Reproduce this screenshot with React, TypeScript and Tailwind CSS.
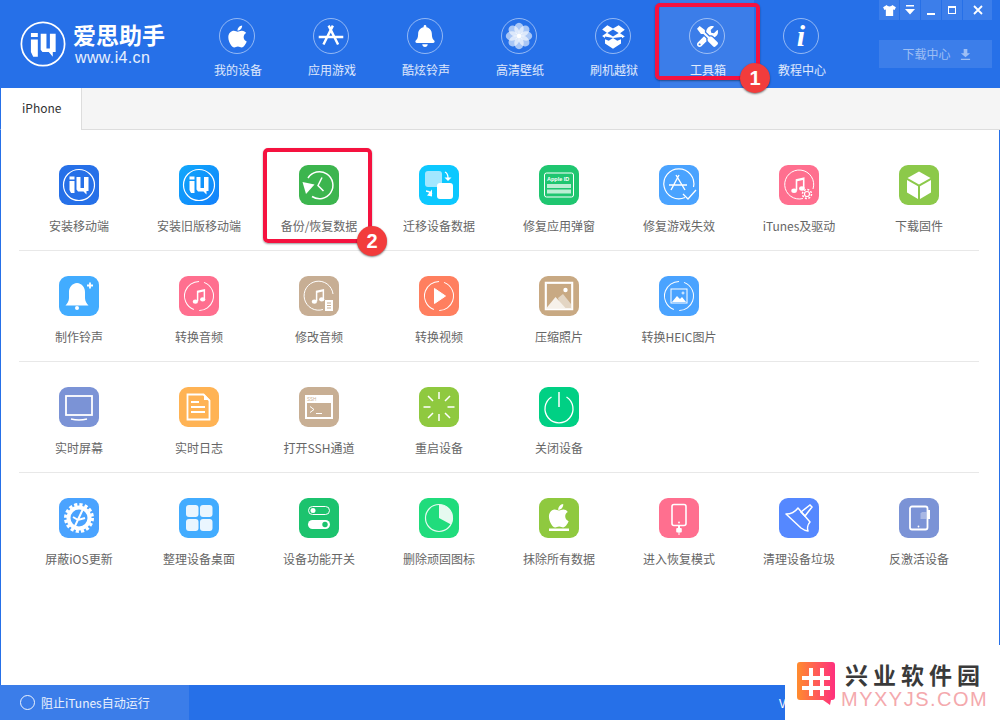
import { FC, ReactNode } from 'react';
import { FaApple, FaBell, FaTools } from 'react-icons/fa';

const W = 'white';

const Svg: FC<{ children: ReactNode }> = ({ children }) => (
  <svg viewBox="0 0 40 40" className="w-10 h-10">{children}</svg>
);

const Mark: FC = () => (
  <>
    <circle cx="20" cy="20" r="15.5" fill="none" stroke={W} strokeWidth="1.2" />
    <path d="M10.5 11.5h5v3h-5zM10.5 16h5v12h-3.5l-1.5-3z" fill={W} />
    <path d="M17.5 12h4v11h3.5V12h4.5v14h-2v3.5l-3-3h-5.5l-1.5-2z" fill={W} />
  </>
);

const Note: FC<{ x?: number; y?: number; s?: number }> = ({ x = 0, y = 0, s = 1 }) => (
  <g transform={`translate(${x} ${y}) scale(${s})`}>
    <path d="M15 11l11-2.5v14h-2V12l-7 1.6V25h-2z" fill={W} />
    <ellipse cx="13" cy="25.5" rx="3.5" ry="2.8" fill={W} />
    <ellipse cx="22.8" cy="22.5" rx="3.5" ry="2.8" fill={W} />
  </g>
);

const Ring: FC<{ rot?: number }> = ({ rot = -70 }) => (
  <circle cx="20" cy="20" r="14.5" fill="none" stroke={W} strokeWidth="1" strokeDasharray="40 5.5" transform={`rotate(${rot} 20 20)`} />
);

const LetterA: FC<{ sw?: number }> = ({ sw = 1.6 }) => (
  <path d="M21 11l-8 15M18 11l9 15M11 21h18" fill="none" stroke={W} strokeWidth={sw} />
);

const apple = 'M30.5 28.2c-.8 1.9-1.2 2.7-2.2 4.3-1.4 2.2-3.4 5-5.9 5-2.2 0-2.8-1.4-5.8-1.4s-3.6 1.4-5.8 1.4c-2.5 0-4.4-2.5-5.8-4.7C1 26.2.6 19.1 3 15.4c1.7-2.6 4.4-4.2 7-4.2 2.6 0 4.2 1.4 6.4 1.4 2.1 0 3.4-1.4 6.4-1.4 2.3 0 4.7 1.2 6.4 3.4-5.6 3.1-4.7 11 1.3 13.6zM20.8 8.800c1.100-1.500 2-3.500 1.700-5.700-1.900.1-4.100 1.300-5.400 2.900-1.200 1.400-2.200 3.500-1.800 5.600 2.100.1 4.200-1.200 5.500-2.800z';

const icons: { label: string; bg: string; icon: ReactNode }[][] = [
  [
    { label: '安装移动端', bg: 'bg-[#2670e8]', icon: <Mark /> },
    { label: '安装旧版移动端', bg: 'bg-gradient-to-br from-[#12a8fb] to-[#1480fb]', icon: <Mark /> },
    {
      label: '备份/恢复数据',
      bg: 'bg-[#3cb54e]',
      icon: (
        <>
          <path d="M9 13A13.5 13.5 0 1 1 13 31.5" fill="none" stroke={W} strokeWidth="1.5" />
          <path d="M3.500 17L15.500 19.500L7 29z" fill={W} />
          <path d="M23 12.500l-4 8 5.500 5.500" fill="none" stroke={W} strokeWidth="1.500" />
        </>
      ),
    },
    {
      label: '迁移设备数据',
      bg: 'bg-[#0cc8ff]',
      icon: (
        <>
          <rect x="6" y="6" width="17" height="16" rx="3" fill="#a2e7ff" />
          <rect x="18" y="18" width="16" height="16" rx="3" fill={W} />
          <path d="M26 7c2 1 3 3 3 6" fill="none" stroke={W} strokeWidth="1.3" />
          <path d="M25.500 12.500h7l-3.500 3.500z" fill={W} />
          <path d="M7 26c2 0 4 1 6 3" fill="none" stroke={W} strokeWidth="1.3" />
          <path d="M13 24.500v7l-5-1z" fill={W} />
        </>
      ),
    },
    {
      label: '修复应用弹窗',
      bg: 'bg-[#1fc670]',
      icon: (
        <>
          <rect x="5.5" y="8" width="29" height="24" rx="2" fill="none" stroke={W} strokeWidth="1" />
          <text x="8" y="16" fontSize="5.5" fontWeight="700" fill={W} fontFamily="'Liberation Sans', sans-serif">Apple ID</text>
          <rect x="8" y="19" width="24" height="4" fill={W} fillOpacity="0.7" />
          <rect x="8" y="24.5" width="24" height="4" fill={W} fillOpacity="0.7" />
        </>
      ),
    },
    {
      label: '修复游戏失效',
      bg: 'bg-[#4aa3ff]',
      icon: (
        <>
          <path d="M26 32.500A15 15 0 1 1 34.500 22" fill="none" stroke={W} strokeWidth="1.2" />
          <g transform="translate(-1 -1)"><LetterA sw={1.4} /></g>
          <path d="M24 29l5 5 8-9" fill="none" stroke={W} strokeWidth="1.3" />
        </>
      ),
    },
    {
      label: 'iTunes及驱动',
      bg: 'bg-[#ff6f8f]',
      icon: (
        <>
          <path d="M24 33.500A14.500 14.500 0 1 1 34 24" fill="none" stroke={W} strokeWidth="1" />
          <Note x={4.7} y={5.4} s={0.8} />
          <circle cx="28" cy="29" r="2.500" fill="none" stroke={W} strokeWidth="1.2" />
          <circle cx="28" cy="29" r="4.500" fill="none" stroke={W} strokeWidth="1.5" strokeDasharray="2 1.5" />
        </>
      ),
    },
    {
      label: '下载固件',
      bg: 'bg-[#8cc94a]',
      icon: (
        <>
          <path d="M20 6.500l11.500 6.500-11.500 6.500L8.500 13z" fill={W} />
          <path d="M8 15l11 6.200V34L8 27.500z" fill={W} />
          <path d="M32 15l-11 6.200V34l11-6.500z" fill={W} />
        </>
      ),
    },
  ],
  [
    {
      label: '制作铃声',
      bg: 'bg-[#42acff]',
      icon: (
        <>
          <path d="M18 7c-5 .4-8 4.300-8 9v6c0 3-1.800 5.500-3.500 7.500h23c-1.700-2-3.500-4.500-3.500-7.500v-6c0-4.700-3-8.600-8-9z" fill={W} />
          <circle cx="18" cy="32" r="2" fill={W} />
          <path d="M31 6.500v6M28 9.500h6" stroke={W} strokeWidth="1.8" />
        </>
      ),
    },
    { label: '转换音频', bg: 'bg-[#ff6f8f]', icon: (<><Ring /><Note x={6.6} y={6.5} s={0.75} /></>) },
    {
      label: '修改音频',
      bg: 'bg-[#c7ae94]',
      icon: (
        <>
          <path d="M24 33.500A14.500 14.500 0 1 1 34 18" fill="none" stroke={W} strokeWidth="1" />
          <Note x={5.6} y={6.5} s={0.75} />
          <path d="M26 24h8v11h-8z" fill={W} />
          <path d="M28 27h4M28 29.500h4M28 32h4" stroke="#c7ae94" strokeWidth="1" />
        </>
      ),
    },
    {
      label: '转换视频',
      bg: 'bg-[#ff7f5f]',
      icon: (<><Ring /><path d="M15.500 12.500l11 7.500-11 7.500z" fill={W} strokeLinejoin="round" stroke={W} /></>),
    },
    {
      label: '压缩照片',
      bg: 'bg-[#c8a983]',
      icon: (
        <>
          <rect x="6.5" y="6.5" width="27" height="27" fill="#f6f1ea" stroke={W} strokeWidth="1.5" />
          <rect x="8" y="8" width="24" height="24" fill="#c8a983" />
          <circle cx="26.5" cy="14" r="2.2" fill={W} />
          <path d="M19 22l5-4 8 10v4H22z" fill="#e3d5c3" />
          <path d="M7.500 32l9-11 10 11z" fill="#f6f1ea" />
        </>
      ),
    },
    {
      label: '转换HEIC图片',
      bg: 'bg-[#4aa3ff]',
      icon: (
        <>
          <Ring />
          <rect x="12" y="13" width="16" height="14" fill="none" stroke={W} strokeWidth="1" />
          <path d="M13 26l5-6 3 3 2-2 4 5z" fill={W} />
          <path d="M24 15.500v3M22.500 17h3" stroke={W} strokeWidth="0.9" />
        </>
      ),
    },
  ],
  [
    {
      label: '实时屏幕',
      bg: 'bg-[#7b93d6]',
      icon: (
        <>
          <rect x="7" y="9" width="26" height="19" fill="none" stroke={W} strokeWidth="1.8" />
          <path d="M12 32c5 1.200 11 1.200 16 0" fill="none" stroke={W} strokeWidth="1.6" />
        </>
      ),
    },
    {
      label: '实时日志',
      bg: 'bg-[#ffb354]',
      icon: (
        <>
          <path d="M8.500 7.500h16l6 6v19h-22z" fill="none" stroke={W} strokeWidth="1.8" />
          <path d="M25 7l6 6h-6z" fill={W} />
          <path d="M12 15h8M12 20h14M12 25h14" stroke={W} strokeWidth="1.8" />
        </>
      ),
    },
    {
      label: '打开SSH通道',
      bg: 'bg-[#c8af94]',
      icon: (
        <>
          <rect x="6" y="8" width="28" height="24" fill={W} />
          <text x="8" y="14" fontSize="4.5" fill="#c8af94" fontFamily="'Liberation Sans', sans-serif">SSH</text>
          <rect x="8" y="16" width="24" height="14" fill="#c8af94" />
          <path d="M11 19.500l4 3-4 3M17 26.500h6" fill="none" stroke={W} strokeWidth="1" />
        </>
      ),
    },
    {
      label: '重启设备',
      bg: 'bg-[#8fc93f]',
      icon: (
        <path d="M20 5v7M20 27v7M4.500 20h7M28.500 20h7M9 9l5 5M26 26l5 5M31 9l-5 5M14 26l-5 5" stroke={W} strokeWidth="1.5" />
      ),
    },
    {
      label: '关闭设备',
      bg: 'bg-[#00d084]',
      icon: (
        <>
          <path d="M12.500 10a14 14 0 1 0 15 0" fill="none" stroke={W} strokeWidth="1.3" />
          <path d="M20 5v15" stroke={W} strokeWidth="1.5" />
        </>
      ),
    },
  ],
  [
    {
      label: '屏蔽iOS更新',
      bg: 'bg-[#4aa3ff]',
      icon: (
        <>
          <circle cx="20" cy="20" r="10.5" fill="none" stroke={W} strokeWidth="4" />
          <circle cx="20" cy="20" r="13.5" fill="none" stroke={W} strokeWidth="3" strokeDasharray="3.2 2.1" />
          <path d="M24 11l-8 17M14 19l5 3 7-2" fill="none" stroke={W} strokeWidth="2" />
        </>
      ),
    },
    {
      label: '整理设备桌面',
      bg: 'bg-[#42acff]',
      icon: (
        <>
          <rect x="7" y="7" width="12.5" height="12" rx="3" fill="#eaf6ff" />
          <rect x="21" y="7" width="12.5" height="12" rx="3" fill="#eaf6ff" />
          <rect x="7" y="21" width="12.5" height="12" rx="3" fill="#eaf6ff" />
          <rect x="21" y="21" width="12.5" height="12" rx="3" fill="#eaf6ff" />
        </>
      ),
    },
    {
      label: '设备功能开关',
      bg: 'bg-[#1cc36e]',
      icon: (
        <>
          <rect x="9.5" y="8.5" width="21" height="8" rx="4" fill="none" stroke={W} strokeWidth="1" />
          <circle cx="14" cy="12.5" r="2.5" fill={W} />
          <rect x="9" y="22" width="22" height="9" rx="4.5" fill={W} />
          <circle cx="26" cy="26.5" r="2.7" fill="#1cc36e" />
        </>
      ),
    },
    {
      label: '删除顽固图标',
      bg: 'bg-[#20dc7c]',
      icon: (
        <>
          <circle cx="20" cy="20" r="13.5" fill="none" stroke="#e6faf0" strokeWidth="1.2" />
          <path d="M20 6.500A13.500 13.500 0 0 1 32 26.500L20 20z" fill="#e6faf0" />
        </>
      ),
    },
    {
      label: '抹除所有数据',
      bg: 'bg-[#8fc93f]',
      icon: (
        <>
          <g transform="translate(8.9 4) scale(0.68)">
            <path d={apple} fill={W} />
          </g>
          <rect x="10" y="30.5" width="20" height="2.5" fill={W} />
        </>
      ),
    },
    {
      label: '进入恢复模式',
      bg: 'bg-[#ff6f8f]',
      icon: (
        <>
          <rect x="13" y="6.500" width="14" height="21" rx="2" fill="none" stroke={W} strokeWidth="1.6" />
          <circle cx="20" cy="24.500" r="0.9" fill={W} />
          <path d="M20 28v2" stroke={W} strokeWidth="2" />
          <rect x="17.2" y="30" width="5.6" height="4.5" rx="1" fill={W} />
          <path d="M20 34v3" stroke={W} strokeWidth="1" />
        </>
      ),
    },
    {
      label: '清理设备垃圾',
      bg: 'bg-[#5588ff]',
      icon: (
        <>
          <path d="M7 16c4 0 9-2 12-6l12 14c-2 2-3 6-2 9-2-.2-5-1.500-7-3z" fill="none" stroke={W} strokeWidth="1.5" strokeLinejoin="round" />
          <path d="M22 14l9-7 2 2-7 9z" fill="none" stroke={W} strokeWidth="1.5" />
        </>
      ),
    },
    {
      label: '反激活设备',
      bg: 'bg-[#7b93d6]',
      icon: (
        <>
          <rect x="11" y="8.500" width="17.500" height="23" rx="2" fill="none" stroke={W} strokeWidth="1.8" />
          <circle cx="19.500" cy="28.500" r="0.9" fill={W} />
          <path d="M23 14h4.500v7h-6v-5.500z" fill={W} fillOpacity="0.35" />
          <path d="M30 12v9" stroke={W} strokeWidth="2" />
        </>
      ),
    },
  ],
];

const navItems: { label: string; active?: boolean; icon: ReactNode }[] = [
  { label: '我的设备', icon: <FaApple size={25} color={W} /> },
  {
    label: '应用游戏',
    icon: (
      <svg viewBox="0 0 36 36" className="w-9 h-9">
        <path d="M20 7L10 27M15.500 7L25.500 27M5 19H31" fill="none" stroke={W} strokeWidth="2.600" />
      </svg>
    ),
  },
  { label: '酷炫铃声', icon: <FaBell size={22} color={W} /> },
  {
    label: '高清壁纸',
    icon: (
      <svg viewBox="0 0 36 36" className="w-9 h-9">
        {[0, 45, 90, 135, 180, 225, 270, 315].map((a) => (
          <ellipse key={a} cx="18" cy="10.5" rx="5" ry="6.5" fill={W} fillOpacity="0.6" transform={`rotate(${a} 18 18)`} />
        ))}
        <circle cx="18" cy="18" r="2.5" fill={W} />
      </svg>
    ),
  },
  {
    label: '刷机越狱',
    icon: (
      <svg viewBox="0 0 36 36" className="w-9 h-9">
        <path d="M12 6.500l6 3.500 6-3.500 6.500 5-5 3.500 5 3.500-3 2v-1.500L18 20l-8.500-1.500V20l-3-2 5-3.500-5-3.500z" fill={W} />
        <path d="M12 14.800L18 11l6 3.800-6 3.700z" fill="#2670e8" />
        <path d="M9.500 21.500l4 1.500 4.500-3 4.500 3 4-1.500v4.500L18 31.500 9.500 26z" fill={W} />
      </svg>
    ),
  },
  { label: '工具箱', active: true, icon: <FaTools size={21} color={W} /> },
  {
    label: '教程中心',
    icon: <span className="font-['Liberation_Serif',serif] italic font-bold text-[30px] leading-none text-white">i</span>,
  },
];

const App: FC = () => {
  return (
    <div className="relative w-[1000px] h-[720px] overflow-hidden flex flex-col bg-white font-['Noto_Sans_CJK_SC',sans-serif]">
      {/* title bar */}
      <div className="h-[88px] shrink-0 flex bg-[#2670e8]">
        <div className="w-[190px] shrink-0 flex pl-5 pt-[21px]">
          <svg viewBox="0 0 40 40" className="w-[46px] h-[46px]">
            <circle cx="20" cy="20" r="18.8" fill="none" stroke={W} strokeWidth="1.5" />
            <path d="M9.500 10.500h6v3.500h-6zM9.500 16h6v15h-4l-2-4z" fill={W} />
            <path d="M18 11h5v13h3V11h5v16h-2.500v4l-3.500-4h-5.500L18 25z" fill={W} />
          </svg>
          <div className="ml-[7px] -mt-[1px]">
            <div className="text-[23px] leading-[28px] font-bold text-white whitespace-nowrap">爱思助手</div>
            <div className="mt-[1px] ml-[2px] text-[16px] leading-[18px] tracking-[0.35px] text-white/90 font-['Liberation_Sans',sans-serif]">www.i4.cn</div>
          </div>
        </div>

        {navItems.map((item) => (
          <div key={item.label} className={`w-[94px] shrink-0 flex flex-col items-center pt-[18px] ${item.active ? 'bg-[#3b7de9]' : ''}`}>
            <div className="w-9 h-9 rounded-full border border-white/50 flex items-center justify-center overflow-hidden">
              {item.icon}
            </div>
            <div className="mt-2 ml-[2px] text-xs leading-4 text-white/85">{item.label}</div>
          </div>
        ))}

        <div className="ml-[31px] w-[113px] shrink-0 flex flex-col">
          <div className="flex gap-[1px] h-5">
            <div className="w-5 bg-white/10 flex items-center justify-center">
              <svg viewBox="0 0 14 12" className="w-[13px] h-[11px]"><path d="M4 0L0 2.500l1.500 3L3 5v7h8V5l1.500.5 1.500-3L10 0c-.5 2-5.500 2-6 0z" fill={W} /></svg>
            </div>
            <div className="w-5 bg-white/10 flex items-center justify-center">
              <svg viewBox="0 0 12 10" className="w-3 h-[10px]"><path d="M2 0h8v1.500H2zM1 4h10L6 9.500z" fill={W} /></svg>
            </div>
            <div className="w-5 bg-white/10 flex items-center justify-center">
              <div className="w-2 h-[2px] mt-2 bg-white" />
            </div>
            <div className="w-5 bg-white/10 flex items-center justify-center">
              <div className="w-2 h-2 border border-white border-t-2" />
            </div>
            <div className="w-[29px] bg-white/10 flex items-center justify-center">
              <svg viewBox="0 0 10 10" className="w-[10px] h-[10px]"><path d="M1 1l8 8M9 1L1 9" stroke={W} strokeWidth="1.8" /></svg>
            </div>
          </div>
          <div className="mt-5 h-7 pl-[2px] bg-white/10 flex items-center justify-center gap-[9px] text-xs text-white/50">
            下载中心
            <svg viewBox="0 0 12 12" className="w-[11px] h-[11px]"><path d="M4 0h4v4.500h3L6 9 1 4.500h3zM1 10.500h10V12H1z" fill={W} fillOpacity="0.5" /></svg>
          </div>
        </div>
      </div>

      {/* tabs */}
      <div className="h-[42px] shrink-0 flex bg-[#f5f5f5] border-b border-[#dddddd] border-l border-l-[#2670e8]">
        <div className="w-[81px] h-[42px] bg-white border-r border-[#dddddd] flex items-center pl-[21px] pb-[2px] text-xs text-[#333333]">iPhone</div>
      </div>

      {/* tools */}
      <div className="flex-1 pt-[10px] pl-[18px] bg-white border-x border-[#2670e8]">
        {icons.map((row, i) => (
          <div key={i} className={`w-[960px] h-[111px] grid grid-cols-8 ${i < icons.length - 1 ? 'border-b border-[#e8e8e8]' : ''}`}>
            {row.map((tool) => (
              <div key={tool.label} className="flex flex-col items-center pt-[25px]">
                <div className={`w-10 h-10 rounded-[9px] overflow-hidden ${tool.bg}`}>
                  <Svg>{tool.icon}</Svg>
                </div>
                <div className="mt-[13px] text-xs leading-4 text-[#666666] whitespace-nowrap">{tool.label}</div>
              </div>
            ))}
          </div>
        ))}
      </div>

      {/* status bar */}
      <div className="h-[35px] shrink-0 flex items-center bg-[#2670e8]">
        <div className="w-[189px] h-full flex items-center pl-5 bg-[#3b7de9]">
          <div className="w-[15px] h-[15px] rounded-full border border-white/90" />
          <span className="ml-[6px] text-xs text-white/90">阻止iTunes自动运行</span>
        </div>
        <span className="ml-[590px] text-xs text-white">V</span>
      </div>

      {/* annotations */}
      <div className="absolute left-[655px] top-[3px] w-[105px] h-[77px] border-4 border-[#f5123f] rounded-[5px] shadow-[0_1px_2px_rgba(0,0,0,0.4)]" />
      <div className="absolute left-[740px] top-[63px] w-[30px] h-[30px] rounded-full bg-[#f23c3c] shadow-[0_1px_2px_rgba(0,0,0,0.5)] flex items-center justify-center text-[20px] font-bold text-white font-['Liberation_Sans',sans-serif]">1</div>
      <div className="absolute left-[263px] top-[148px] w-[109px] h-[95px] border-4 border-[#f5123f] rounded-[5px] shadow-[0_1px_2px_rgba(0,0,0,0.4)]" />
      <div className="absolute left-[357px] top-[226px] w-[30px] h-[30px] rounded-full bg-[#f23c3c] shadow-[0_1px_2px_rgba(0,0,0,0.5)] flex items-center justify-center text-[20px] font-bold text-white font-['Liberation_Sans',sans-serif]">2</div>

      {/* watermark */}
      <div className="absolute left-[785px] top-[645px] w-[215px] h-[75px] bg-white flex items-start pl-[12px] pt-[17px]">
        <svg viewBox="0 0 38 44" className="w-[38px] h-[44px] shrink-0">
          <defs>
            <linearGradient id="wm" x1="0" y1="0" x2="1" y2="0">
              <stop offset="0" stopColor="#ff8c2e" />
              <stop offset="1" stopColor="#ff2f7e" />
            </linearGradient>
          </defs>
          <path d="M3 0h32a3 3 0 0 1 3 3v32a3 3 0 0 1-3 3h-1l-1 5-7-5H3a3 3 0 0 1-3-3V3a3 3 0 0 1 3-3z" fill="url(#wm)" />
          <path d="M12 6h4v8h7V6h4v8h6v4h-6v6h6v4h-6v6h-4v-6h-7v6h-4v-6H5v-4h7v-6H5v-4h7zm4 12v6h7v-6z" fill={W} />
        </svg>
        <div className="ml-[8px]">
          <div className="ml-[2px] text-[23px] leading-[24px] font-bold tracking-[5px] text-[#3a3a3a] whitespace-nowrap">兴业软件园</div>
          <div className="-ml-[2px] mt-[5px] text-[20px] leading-[16px] tracking-[1.5px] text-[#f4a9ad] font-['Liberation_Sans',sans-serif] whitespace-nowrap">MYXYJS.COM</div>
        </div>
      </div>
    </div>
  );
};

export default App;
